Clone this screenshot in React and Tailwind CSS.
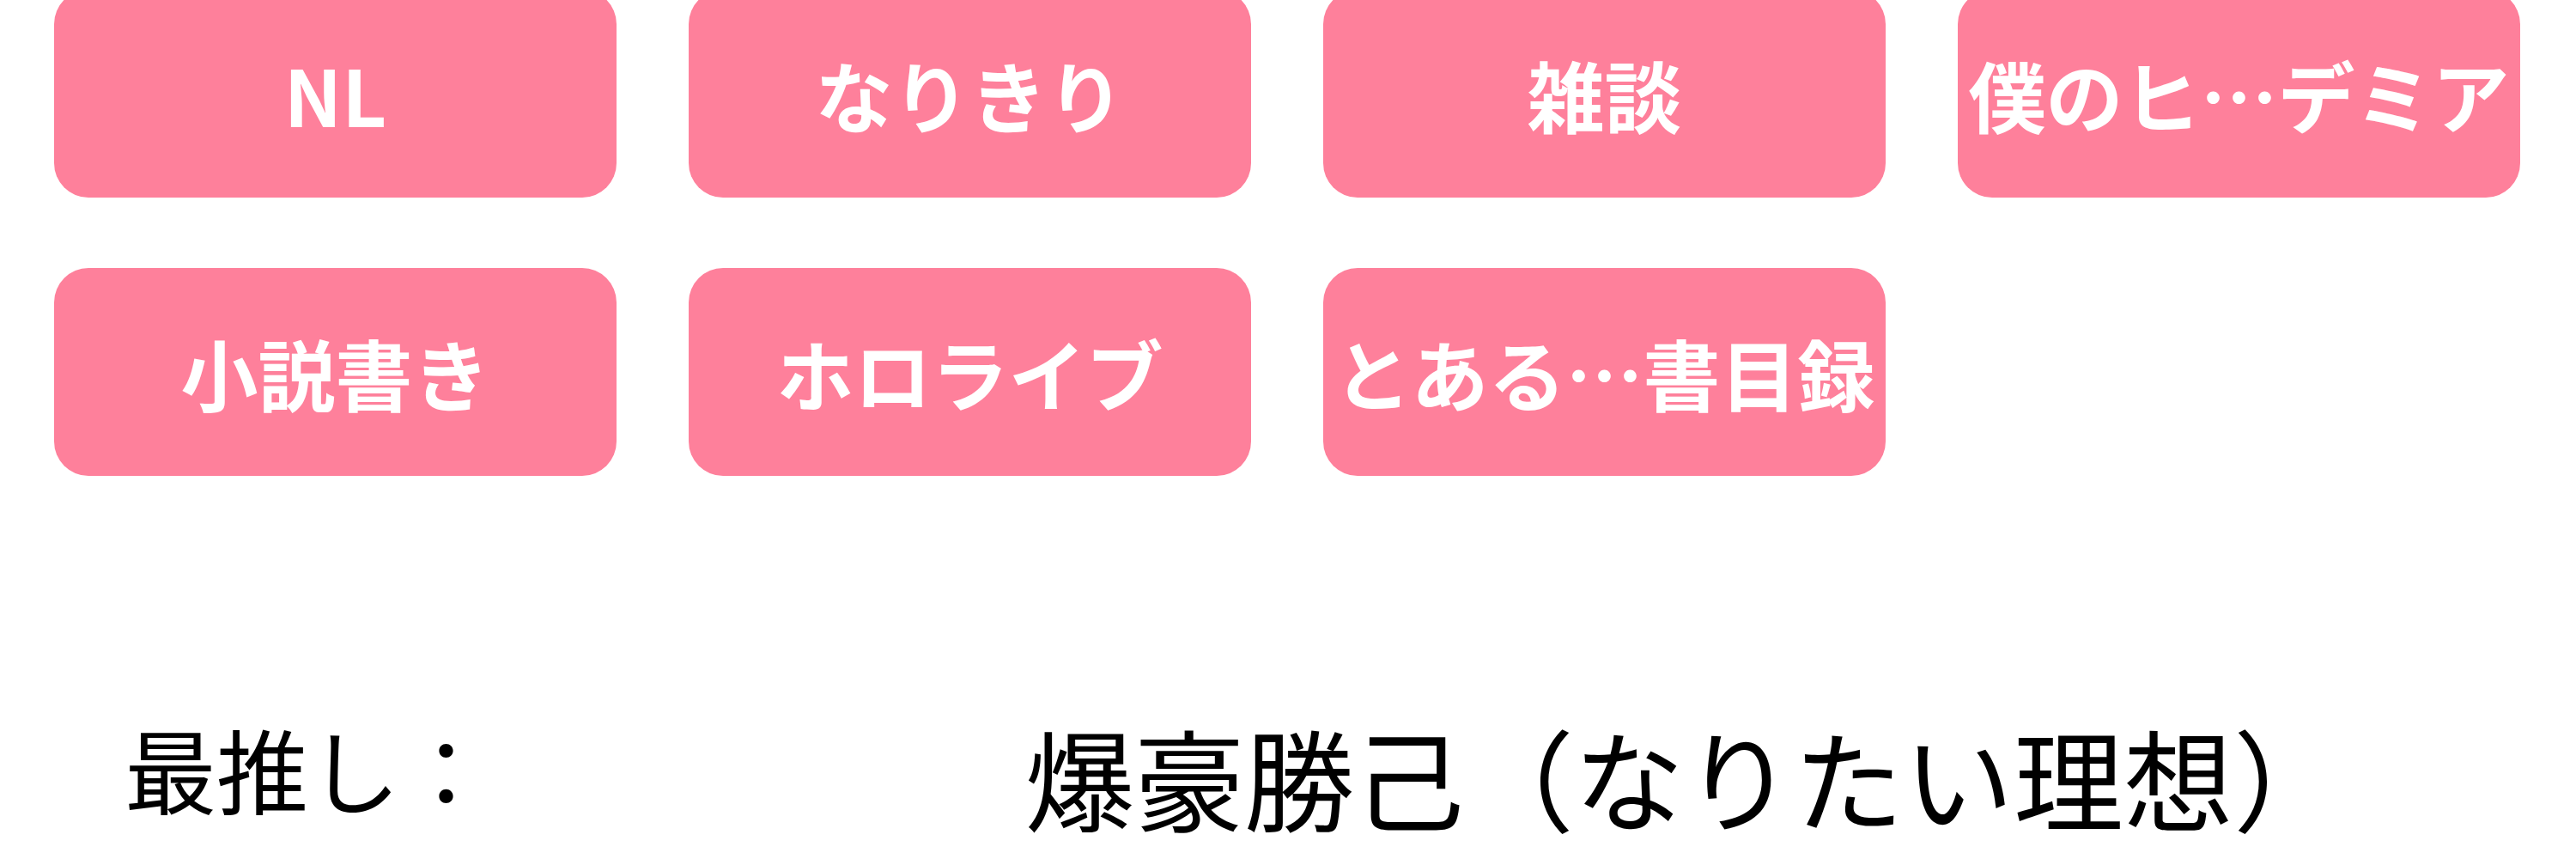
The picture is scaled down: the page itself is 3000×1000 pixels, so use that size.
import React from 'react'

// Tag chips shown on the profile page
const tags = [
  'NL',
  'なりきり',
  '雑談',
  '僕のヒ…デミア',
  '小説書き',
  'ホロライブ',
  'とある…書目録'
]

const Tag = ({ label }) => (
  <div className="flex h-[242px] items-center justify-center overflow-hidden whitespace-nowrap rounded-[40px] bg-[#fe809b] text-[90px] font-semibold leading-none text-white">
    {label}
  </div>
)

const App = () => {
  return (
    <div
      className="h-[1000px] w-[3000px] overflow-hidden bg-white"
      style={{ fontFamily: '"Noto Sans CJK JP", "Noto Sans", sans-serif' }}
    >
      {/* Tags */}
      <div className="-mt-[12px] grid grid-cols-[repeat(4,655px)] gap-x-[84px] gap-y-[82px] pl-[63px]">
        {tags.map((tag) => (
          <Tag key={tag} label={tag} />
        ))}
      </div>

      {/* Favourite */}
      <div className="mt-[286px] flex items-start pl-[145px] text-black">
        <span className="w-[1048px] text-[107px] leading-none">最推し：</span>
        <span className="text-[128px] leading-none">爆豪勝己（なりたい理想）</span>
      </div>
    </div>
  )
}

export default App
